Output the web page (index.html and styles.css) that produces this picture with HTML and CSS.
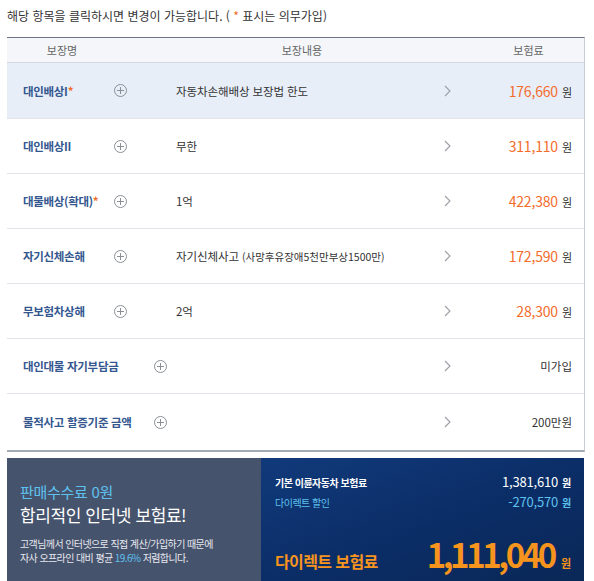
FILE: index.html
```html
<!DOCTYPE html>
<html lang="ko">
<head>
<meta charset="utf-8">
<title>보험료</title>
<link rel="stylesheet" href="styles.css">
</head>
<body>
<p class="notice">해당 항목을 클릭하시면 변경이 가능합니다. ( <span class="star">*</span> 표시는 의무가입)</p>

<div class="table">
  <div class="thead">
    <span class="th th-name">보장명</span>
    <span class="th th-content">보장내용</span>
    <span class="th th-price">보험료</span>
  </div>

  <div class="row active">
    <div class="col-name"><span class="name">대인배상I<span class="star">*</span></span><span class="plus"></span></div>
    <div class="col-content">자동차손해배상 보장법 한도</div>
    <svg class="chev" viewBox="0 0 7 12" width="7" height="12"><polyline points="1,1 6,6 1,11"/></svg>
    <div class="col-price"><span class="amt">176,660</span><span class="won">원</span></div>
  </div>

  <div class="row">
    <div class="col-name"><span class="name">대인배상II</span><span class="plus"></span></div>
    <div class="col-content">무한</div>
    <svg class="chev" viewBox="0 0 7 12" width="7" height="12"><polyline points="1,1 6,6 1,11"/></svg>
    <div class="col-price"><span class="amt">311,110</span><span class="won">원</span></div>
  </div>

  <div class="row">
    <div class="col-name"><span class="name">대물배상(확대)<span class="star">*</span></span><span class="plus"></span></div>
    <div class="col-content">1억</div>
    <svg class="chev" viewBox="0 0 7 12" width="7" height="12"><polyline points="1,1 6,6 1,11"/></svg>
    <div class="col-price"><span class="amt">422,380</span><span class="won">원</span></div>
  </div>

  <div class="row">
    <div class="col-name"><span class="name">자기신체손해</span><span class="plus"></span></div>
    <div class="col-content">자기신체사고 <span class="small">(사망후유장애5천만부상1500만)</span></div>
    <svg class="chev" viewBox="0 0 7 12" width="7" height="12"><polyline points="1,1 6,6 1,11"/></svg>
    <div class="col-price"><span class="amt">172,590</span><span class="won">원</span></div>
  </div>

  <div class="row">
    <div class="col-name"><span class="name">무보험차상해</span><span class="plus"></span></div>
    <div class="col-content">2억</div>
    <svg class="chev" viewBox="0 0 7 12" width="7" height="12"><polyline points="1,1 6,6 1,11"/></svg>
    <div class="col-price"><span class="amt">28,300</span><span class="won">원</span></div>
  </div>

  <div class="row">
    <div class="col-name"><span class="name wide">대인대물 자기부담금</span><span class="plus"></span></div>
    <div class="col-content"></div>
    <svg class="chev" viewBox="0 0 7 12" width="7" height="12"><polyline points="1,1 6,6 1,11"/></svg>
    <div class="col-price"><span class="plain">미가입</span></div>
  </div>

  <div class="row last">
    <div class="col-name"><span class="name wide">물적사고 할증기준 금액</span><span class="plus"></span></div>
    <div class="col-content"></div>
    <svg class="chev" viewBox="0 0 7 12" width="7" height="12"><polyline points="1,1 6,6 1,11"/></svg>
    <div class="col-price"><span class="plain">200만원</span></div>
  </div>
</div>

<div class="summary">
  <div class="promo">
    <div class="promo-title">판매수수료 0원</div>
    <div class="promo-head">합리적인 인터넷 보험료!</div>
    <p class="promo-text">고객님께서 인터넷으로 직접 계산/가입하기 때문에<br>자사 오프라인 대비 평균 <span class="hl">19.6%</span> 저렴합니다.</p>
  </div>
  <div class="total">
    <div class="line">
      <span class="label">기본 이륜자동차 보험료</span>
      <span class="val">1,381,610<span class="w">원</span></span>
    </div>
    <div class="line discount">
      <span class="label">다이렉트 할인</span>
      <span class="val">-270,570<span class="w">원</span></span>
    </div>
    <div class="final">
      <span class="final-label">다이렉트 보험료</span>
      <span class="final-val">1,111,040<span class="fw">원</span></span>
    </div>
  </div>
</div>
</body>
</html>
```

FILE: styles.css
```css
* { box-sizing: border-box; }

body {
  margin: 0;
  padding: 0 9px 0 7px;
  background: #fff;
  font-family: "Noto Sans CJK KR", "Noto Sans", sans-serif;
  color: #333;
  width: 594px;
}

.notice {
  margin: 0;
  padding-top: 6px;
  height: 37px;
  font-size: 12px;
  line-height: 20px;
  letter-spacing: 0;
  color: #333;
}

.star { color: #f26c2c; }

.table {
  width: 578px;
  border-top: 1px solid #6e7684;
  border-right: 1px solid #c9ced6;
  border-bottom: 2px solid #a3aab5;
}

.thead {
  display: flex;
  height: 25px;
  align-items: center;
  background: #f4f6f9;
  border-bottom: 1px solid #d3d8df;
  font-size: 11px;
  color: #666;
}

.th { text-align: center; }
.th-name { width: 110px; }
.th-content { width: 370px; }
.th-price { flex: 1; padding-right: 14px; }

.row {
  display: flex;
  align-items: center;
  height: 55px;
  border-bottom: 1px solid #e1e4e8;
  font-size: 11px;
}
.row.active { background: #e8eef8; height: 56px; }
.row.last { border-bottom: 0; height: 56px; }

.col-name {
  width: 169px;
  padding-left: 16px;
  display: flex;
  align-items: center;
}

.name {
  width: 91px;
  font-size: 11.5px;
  font-weight: 700;
  color: #34578f;
  letter-spacing: -0.3px;
  white-space: nowrap;
}
.name.wide { width: 131px; }

.plus {
  width: 13px;
  height: 13px;
  border: 1px solid #8b8f96;
  border-radius: 50%;
  position: relative;
  flex: none;
}
.plus::before, .plus::after {
  content: "";
  position: absolute;
  background: #8b8f96;
}
.plus::before { left: 2px; right: 2px; top: 5px; height: 1px; }
.plus::after { top: 2px; bottom: 2px; left: 5px; width: 1px; }

.col-content {
  flex: 1;
  font-size: 11.5px;
  color: #333;
  letter-spacing: -0.1px;
}
.col-content .small { font-size: 10.5px; letter-spacing: 0; }

.chev {
  flex: none;
  margin-right: 13px;
  fill: none;
  stroke: #9a9ea5;
  stroke-width: 1.1;
}

.col-price {
  width: 120px;
  padding-right: 12px;
  text-align: right;
  white-space: nowrap;
}
.amt {
  font-size: 14px;
  color: #f26c2c;
  letter-spacing: -0.2px;
}
.won {
  font-size: 11px;
  color: #333;
  margin-left: 4px;
}
.plain { font-size: 11.5px; color: #333; }

.summary {
  display: flex;
  width: 577px;
  margin-top: 6px;
  height: 124px;
}

.promo {
  width: 254px;
  background: #46536d;
  padding: 23px 0 0 13px;
  color: #fff;
}
.promo-title {
  font-size: 15px;
  line-height: 22px;
  color: #5ec2ee;
  letter-spacing: -0.3px;
}
.promo-head {
  font-size: 17px;
  line-height: 24px;
  color: #fff;
  letter-spacing: -0.4px;
}
.promo-text {
  margin: 10px 0 0;
  font-size: 10px;
  line-height: 14px;
  letter-spacing: -0.6px;
  color: #e6e8ee;
}
.hl { color: #5ec2ee; }

.total {
  flex: 1;
  background: linear-gradient(160deg, #113a7b 0%, #0b2d66 55%, #0a2857 100%);
  padding: 16px 13px 0 14px;
  color: #fff;
}
.line {
  display: flex;
  justify-content: space-between;
  align-items: baseline;
  height: 16px;
  line-height: 16px;
}
.line.discount { margin-top: 4px; color: #5ec2ee; }
.label {
  font-size: 10px;
  font-weight: 700;
  letter-spacing: -0.5px;
}
.discount .label { font-weight: 400; }
.val {
  font-size: 13px;
  letter-spacing: -0.2px;
}
.w { font-size: 10px; margin-left: 4px; font-weight: 700; }

.final {
  display: flex;
  justify-content: space-between;
  align-items: baseline;
  margin-top: 25px;
  color: #f7941d;
}
.final-label {
  font-size: 16px;
  letter-spacing: -0.6px;
  font-weight: 700;
}
.final-val {
  font-size: 33px;
  line-height: 38px;
  letter-spacing: -3.4px;
  font-weight: 700;
}
.fw { font-size: 11px; letter-spacing: 0; margin-left: 7px; }
```
